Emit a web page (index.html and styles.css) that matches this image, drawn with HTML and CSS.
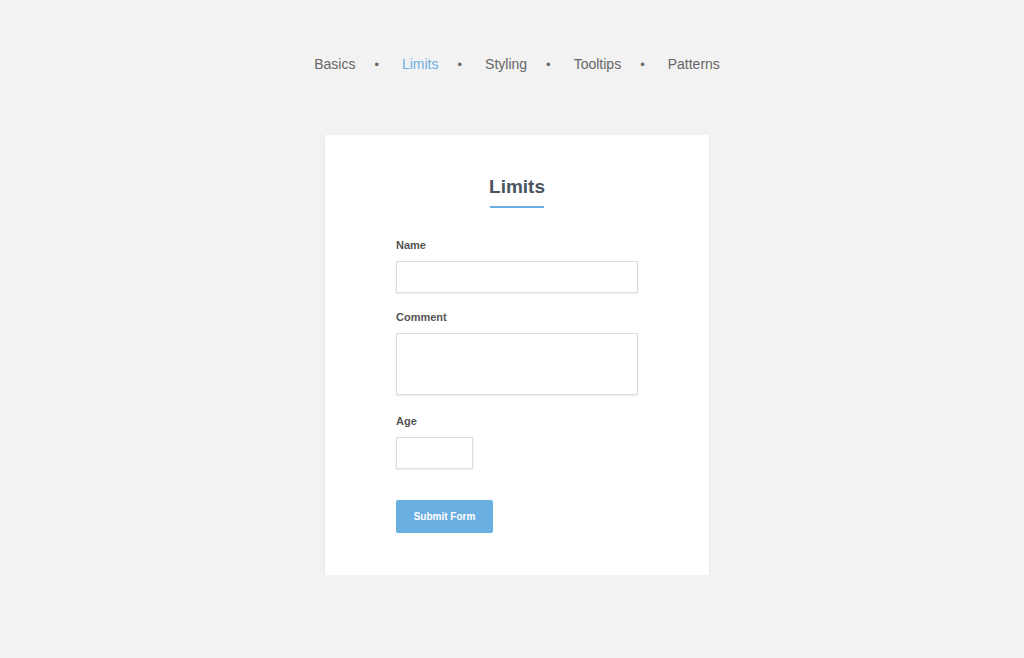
FILE: index.html
```html
<!DOCTYPE html>
<html>
<head>
<meta charset="utf-8">
<link rel="stylesheet" href="styles.css">
</head>
<body>
<nav class="nav">
  <a class="nav-item">Basics</a><span class="dot">•</span>
  <a class="nav-item active">Limits</a><span class="dot">•</span>
  <a class="nav-item">Styling</a><span class="dot">•</span>
  <a class="nav-item">Tooltips</a><span class="dot">•</span>
  <a class="nav-item">Patterns</a>
</nav>
<main class="card">
  <h1 class="title">Limits</h1>
  <form class="form">
    <label class="label">Name</label>
    <input class="field" type="text">
    <label class="label">Comment</label>
    <textarea class="field area"></textarea>
    <label class="label">Age</label>
    <input class="field small" type="text">
    <button class="btn" type="button">Submit Form</button>
  </form>
</main>
</body>
</html>
```

FILE: styles.css
```css
html, body {
  margin: 0;
  padding: 0;
  background: #f2f2f2;
  font-family: "Liberation Sans", Arial, sans-serif;
}
body {
  padding-left: 10px;
}
.nav {
  display: flex;
  justify-content: center;
  align-items: center;
  padding-top: 55px;
  height: 18px;
  font-size: 14px;
  color: #666;
}
.nav-item {
  color: #666;
  text-decoration: none;
}
.nav-item.active {
  color: #6aafe2;
}
.dot {
  margin: 0 23px 0 19px;
  font-size: 13px;
  color: #666;
}
.card {
  width: 384px;
  margin: 62px auto 0;
  background: #fff;
  box-shadow: 0 1px 2px rgba(0,0,0,0.09);
  padding: 41px 0 42px;
  box-sizing: border-box;
  height: 440px;
}
.title {
  margin: 0 auto;
  width: 54px;
  font-size: 19px;
  font-weight: bold;
  color: #4a5560;
  text-align: center;
  line-height: 22px;
  padding-bottom: 8px;
  border-bottom: 2px solid #6aafe2;
  white-space: nowrap;
  display: flex;
  justify-content: center;
}
.form {
  width: 242px;
  margin: 30px auto 0;
  display: flex;
  flex-direction: column;
  align-items: flex-start;
}
.label {
  font-size: 11px;
  font-weight: bold;
  color: #555;
  line-height: 14px;
  margin-bottom: 9px;
}
.field {
  width: 242px;
  height: 32px;
  box-sizing: border-box;
  border: 1px solid #dcdcdc;
  box-shadow: 0 1px 2px rgba(0,0,0,0.08);
  background: #fff;
  margin: 0 0 17px;
  padding: 4px 8px;
  font-family: inherit;
  font-size: 13px;
}
.area {
  height: 62px;
  resize: none;
  margin-bottom: 19px;
}
.small {
  width: 77px;
  margin-bottom: 31px;
}
.btn {
  width: 97px;
  height: 33px;
  background: #6aafe2;
  color: #fff;
  border: none;
  border-radius: 2px;
  font-family: inherit;
  font-size: 10px;
  font-weight: bold;
  padding: 0;
}
```
